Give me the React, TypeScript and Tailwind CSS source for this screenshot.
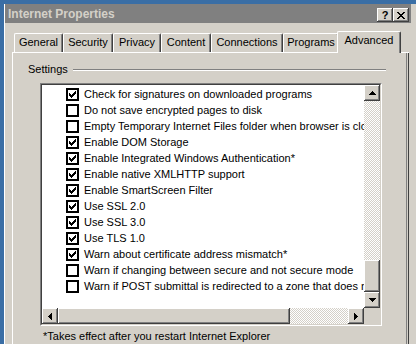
import React from "react";

const FONT = "font-['Liberation_Sans',Arial,sans-serif]";

// 3D raised look used by buttons in the old Windows theme
const RAISED =
  "shadow-[inset_-1px_-1px_#404040,inset_1px_1px_#ffffff,inset_-2px_-2px_#808080,inset_2px_2px_#d4d0c8]";

const CHECKER =
  "bg-[image:repeating-conic-gradient(#ffffff_0_25%,#d4d0c8_0_50%)] bg-[length:2px_2px]";

const tabs = [
  { label: "General", w: "w-[49px]" },
  { label: "Security", w: "w-[50px]" },
  { label: "Privacy", w: "w-[48px]" },
  { label: "Content", w: "w-[50px]" },
  { label: "Connections", w: "w-[72px]" },
  { label: "Programs", w: "w-[56px]" },
];

const settings: { label: string; checked: boolean }[] = [
  { label: "Check for signatures on downloaded programs", checked: true },
  { label: "Do not save encrypted pages to disk", checked: false },
  { label: "Empty Temporary Internet Files folder when browser is closed", checked: false },
  { label: "Enable DOM Storage", checked: true },
  { label: "Enable Integrated Windows Authentication*", checked: true },
  { label: "Enable native XMLHTTP support", checked: true },
  { label: "Enable SmartScreen Filter", checked: true },
  { label: "Use SSL 2.0", checked: true },
  { label: "Use SSL 3.0", checked: true },
  { label: "Use TLS 1.0", checked: true },
  { label: "Warn about certificate address mismatch*", checked: true },
  { label: "Warn if changing between secure and not secure mode", checked: false },
  { label: "Warn if POST submittal is redirected to a zone that does not permit posts", checked: false },
];

function CheckBox({ checked }: { checked: boolean }) {
  return (
    <div className="w-[13px] h-[13px] shrink-0 border-2 border-black bg-white">
      {checked && (
        <svg width="9" height="9" viewBox="0 0 9 9" shapeRendering="crispEdges">
          {/* pixel check mark */}
          <rect x="1" y="3" width="1" height="3" fill="#000" />
          <rect x="2" y="4" width="1" height="3" fill="#000" />
          <rect x="3" y="5" width="1" height="3" fill="#000" />
          <rect x="4" y="4" width="1" height="3" fill="#000" />
          <rect x="5" y="3" width="1" height="3" fill="#000" />
          <rect x="6" y="2" width="1" height="3" fill="#000" />
          <rect x="7" y="1" width="1" height="3" fill="#000" />
        </svg>
      )}
    </div>
  );
}

function Arrow({ dir }: { dir: "up" | "down" | "left" | "right" }) {
  const rows = [0, 1, 2, 3];
  const vertical = dir === "up" || dir === "down";
  return (
    <svg
      width={vertical ? 7 : 4}
      height={vertical ? 4 : 7}
      shapeRendering="crispEdges"
    >
      {rows.map((i) => {
        const len = 1 + i * 2;
        const off = 3 - i;
        if (dir === "up") return <rect key={i} x={off} y={i} width={len} height={1} fill="#000" />;
        if (dir === "down") return <rect key={i} x={i} y={i} width={7 - i * 2} height={1} fill="#000" />;
        if (dir === "left") return <rect key={i} x={i} y={off} width={1} height={len} fill="#000" />;
        return <rect key={i} x={i} y={i} width={1} height={7 - i * 2} fill="#000" />;
      })}
    </svg>
  );
}

function ScrollButton({ dir }: { dir: "up" | "down" | "left" | "right" }) {
  return (
    <div className={`w-[16px] h-[16px] shrink-0 bg-[#d4d0c8] flex items-center justify-center ${RAISED}`}>
      <Arrow dir={dir} />
    </div>
  );
}

export default function App() {
  return (
    <div
      className={`w-[416px] h-[344px] overflow-hidden bg-[#3a6ea5] pt-[4px] pl-[4px] text-[11px] leading-[13px] text-black ${FONT}`}
    >
      <div className="w-[420px] h-[360px] bg-[#d4d0c8] shadow-[inset_1px_0_#ffffff] pl-[1px]">
        {/* title bar */}
        <div className="w-[406px] h-[19px] bg-[#808080] flex justify-between pl-[3px] pr-[2px]">
          <span className="pt-[4px] font-bold text-[12px] leading-[13px] text-[#d4d0c8]">Internet Properties</span>
          <div className="flex mt-[4px]">
            <div className={`w-[16px] h-[14px] bg-[#d4d0c8] flex items-center justify-center font-bold text-[11px] leading-[11px] ${RAISED}`}>
              ?
            </div>
            <div className={`w-[16px] h-[14px] bg-[#d4d0c8] flex items-center justify-center ${RAISED}`}>
              <svg width="8" height="7" viewBox="0 0 8 7" shapeRendering="crispEdges">
                <path d="M0 0h2l2 2.5L6 0h2L5 3.5L8 7H6L4 4.5L2 7H0l3-3.5z" fill="#000" />
              </svg>
            </div>
          </div>
        </div>

        {/* tabs */}
        <div className="relative z-10 flex items-end h-[29px] pl-[9px] pt-[8px]">
          {tabs.map((t) => (
            <div
              key={t.label}
              className={`${t.w} h-[19px] pt-[2px] text-center border-l border-t border-white border-r border-r-[#404040] rounded-t-[2px] shadow-[inset_-1px_0_#808080]`}
            >
              {t.label}
            </div>
          ))}
          <div className="w-[64px] h-[22px] -ml-[2px] -mb-[1px] pt-[2px] text-center bg-[#d4d0c8] border-l border-t border-white border-r border-r-[#404040] rounded-t-[2px] shadow-[inset_-1px_0_#808080]">
            Advanced
          </div>
        </div>

        {/* tab panel */}
        <div className="ml-[7px] w-[397px] h-[300px] pt-[11px] shadow-[inset_1px_1px_#ffffff,inset_-1px_0_#404040,inset_-2px_0_#d4d0c8,inset_-3px_0_#808080]">
          <div className="flex items-center pl-[16px] pr-[23px]">
            <span>Settings</span>
            <div className="flex-1 ml-[5px] mt-[1px] h-[2px] border-t border-[#808080] border-b border-b-white" />
          </div>

          {/* tree list */}
          <div className="ml-[28px] mt-[7px] w-[342px] h-[243px] border border-t-[#808080] border-l-[#808080] border-r-white border-b-white">
            <div className="w-full h-full border border-t-[#404040] border-l-[#404040] border-r-[#d4d0c8] border-b-[#d4d0c8] bg-white flex flex-col">
              <div className="flex h-[223px]">
                <div className="flex-1 overflow-hidden pt-[3px]">
                  {settings.map((s) => (
                    <div key={s.label} className="h-[16px] flex items-start pl-[24px] whitespace-nowrap">
                      <CheckBox checked={s.checked} />
                      <span className="ml-[5px]">{s.label}</span>
                    </div>
                  ))}
                </div>
                {/* vertical scroll bar */}
                <div className="w-[16px] flex flex-col">
                  <ScrollButton dir="up" />
                  <div className={`h-[159px] ${CHECKER}`} />
                  <div className={`h-[32px] bg-[#d4d0c8] ${RAISED}`} />
                  <ScrollButton dir="down" />
                </div>
              </div>
              {/* horizontal scroll bar */}
              <div className="flex h-[16px]">
                <ScrollButton dir="left" />
                <div className={`w-[232px] bg-[#d4d0c8] ${RAISED}`} />
                <div className={`w-[58px] ${CHECKER}`} />
                <ScrollButton dir="right" />
                <div className="w-[16px] bg-[#d4d0c8]" />
              </div>
            </div>
          </div>

          <p className="ml-[31px] mt-[4px]">*Takes effect after you restart Internet Explorer</p>
        </div>
      </div>
    </div>
  );
}
